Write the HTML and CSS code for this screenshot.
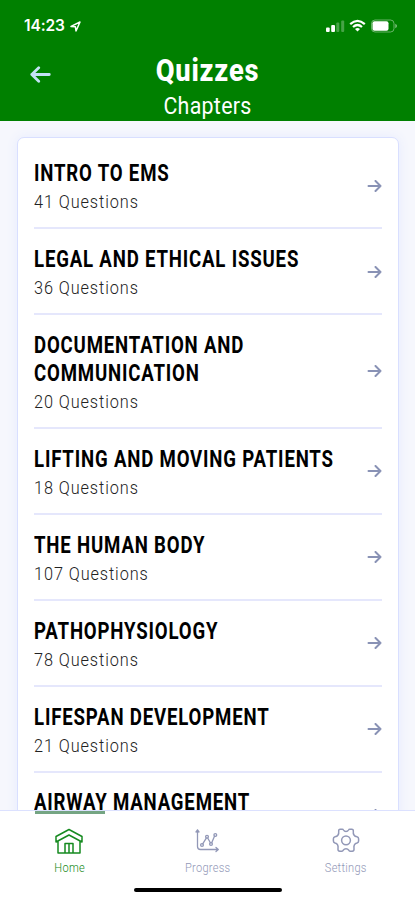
FILE: index.html
```html
<!DOCTYPE html>
<html lang="en">
<head>
<meta charset="utf-8">
<meta name="viewport" content="width=device-width, initial-scale=1">
<title>Quizzes</title>
<link rel="stylesheet" href="styles.css">
</head>
<body>
<svg class="defs" width="0" height="0"><symbol id="arrow" viewBox="0 0 14 12"><path d="M1 6H13M8 1L13 6L8 11" fill="none" stroke="currentColor" stroke-width="2" stroke-linecap="round" stroke-linejoin="round"/></symbol></svg>
<div class="app">
  <header class="header">
    <div class="status">
      <div class="clock"><span class="time">14:23</span>
        <svg width="11" height="11" viewBox="0 0 11 11"><path d="M1 5.4L10 1L6 10L5.4 5.8Z" fill="none" stroke="#fff" stroke-width="1.5" stroke-linejoin="round"/></svg>
      </div>
      <svg class="signals" width="73" height="14" viewBox="0 0 73 14">
        <g fill="#fff"><rect x="1" y="8.5" width="3.7" height="4.5" rx="1"/><rect x="6.2" y="6" width="3.8" height="7" rx="1"/><g opacity=".28"><rect x="11.3" y="3.5" width="3" height="9.5" rx="1"/><rect x="16.2" y="1.5" width="3" height="11.5" rx="1"/></g></g>
        <g fill="none" stroke="#fff" stroke-width="2.2"><path d="M25.2 5.1Q32.5-1.5 39.8 5.1"/><path d="M28 8Q32.5 4 37 8"/></g><path d="M30 10Q32.5 8 35 10L32.5 12.5Z" fill="#fff"/>
        <rect x="46.5" y="1" width="22.5" height="12" rx="3.5" fill="none" stroke="#fff" stroke-opacity=".4"/><rect x="47.5" y="2.2" width="16" height="9.6" rx="2" fill="#fff"/><path d="M70.3 4.8V9.2Q72 8.5 72 7T70.3 4.8" fill="#fff" opacity=".5"/>
      </svg>
    </div>
    <div class="heading">
      <svg class="back" width="21" height="17" viewBox="0 0 21 17"><path d="M19.3 8.5H1.8M8.7 1.8L1.8 8.5L8.7 15.2" fill="none" stroke="#c3e2f5" stroke-width="2.8" stroke-linecap="round" stroke-linejoin="round"/></svg>
      <div class="titles"><h1>Quizzes</h1><p>Chapters</p></div>
    </div>
  </header>
  <main class="content">
    <ul class="card">
      <li class="row"><div class="text"><h2>INTRO TO EMS</h2><p>41 Questions</p></div><svg class="go"><use href="#arrow"/></svg></li>
      <li class="row"><div class="text"><h2>LEGAL AND ETHICAL ISSUES</h2><p>36 Questions</p></div><svg class="go"><use href="#arrow"/></svg></li>
      <li class="row"><div class="text"><h2>DOCUMENTATION AND<br>COMMUNICATION</h2><p>20 Questions</p></div><svg class="go"><use href="#arrow"/></svg></li>
      <li class="row"><div class="text"><h2>LIFTING AND MOVING PATIENTS</h2><p>18 Questions</p></div><svg class="go"><use href="#arrow"/></svg></li>
      <li class="row"><div class="text"><h2>THE HUMAN BODY</h2><p>107 Questions</p></div><svg class="go"><use href="#arrow"/></svg></li>
      <li class="row"><div class="text"><h2>PATHOPHYSIOLOGY</h2><p>78 Questions</p></div><svg class="go"><use href="#arrow"/></svg></li>
      <li class="row"><div class="text"><h2>LIFESPAN DEVELOPMENT</h2><p>21 Questions</p></div><svg class="go"><use href="#arrow"/></svg></li>
      <li class="row"><div class="text"><h2>AIRWAY MANAGEMENT</h2><p></p></div><svg class="go"><use href="#arrow"/></svg></li>
    </ul>
  </main>
  <nav class="tabs">
    <a class="tab active"><svg width="28" height="27" viewBox="0 0 28 27"><path d="M1 8.5L14 1.5L27 8.5V14L14 7L1 14ZM3 13V25H25V13M10 25V15.5H18V25M14 16V25" fill="none" stroke="currentColor" stroke-width="1.5" stroke-linejoin="round"/></svg><span>Home</span></a>
    <a class="tab"><svg width="28" height="27" viewBox="0 0 28 27"><g fill="none" stroke="currentColor" stroke-width="1.3" stroke-linecap="round" stroke-linejoin="round"><path d="M4.5 2V18.5Q4.5 21.5 7.5 21.5H25M3 4L4.5 2L6 4M23 19.5L25.3 21.5L23 23.5M9.7 15.8L13.3 10.1M14.8 10.2L17.4 14.8M18.7 14.7L21.6 8.1"/><circle cx="9" cy="17" r="1.4"/><circle cx="14" cy="8.8" r="1.4"/><circle cx="18" cy="16" r="1.4"/><circle cx="22.3" cy="7" r="1.4"/></g></svg><span>Progress</span></a>
    <a class="tab"><svg width="28" height="27" viewBox="0 0 28 27"><g fill="none" stroke="currentColor" stroke-width="1.5" stroke-linejoin="round"><path d="M8.2 1.2H10.3Q11.1 1.2 11.5 2Q12.3 3.5 14 3.5T16.5 2Q16.9 1.2 17.7 1.2H19.8Q21.5 1.3 21.3 3Q20.8 8.2 25 8.7Q26.6 9 26.6 10.8V13Q26.6 14.5 25 15Q21.3 16 22 20.5Q22.3 23.2 20.2 23.2H18Q17.2 23.2 16.7 22.2Q15.8 20.7 14 20.7T11.3 22.2Q10.8 23.2 10 23.2H7.8Q5.7 23.2 6 20.5Q6.7 16 3 15Q1.4 14.5 1.4 13V10.8Q1.4 9 3 8.7Q7.2 8.2 6.7 3Q6.5 1.3 8.2 1.2Z"/><circle cx="14" cy="12.3" r="4.4"/></g></svg><span>Settings</span></a>
    <i class="indicator"></i>
    <i class="home-bar"></i>
  </nav>
</div>
</body>
</html>
```
FILE: styles.css
```css
* { box-sizing: border-box; }
body, h1, h2, p, ul { margin: 0; padding: 0; }
body { font-family: Roboto, "Liberation Sans", sans-serif; color: #000; }
.defs { display: block; height: 0; }
.app { height: 900px; display: flex; flex-direction: column; overflow: hidden; background: #f6f7fd; }
.header { height: 121px; flex: none; background: #008000; color: #fff; }
.status { height: 52px; padding: 0 17px 0 24px; display: flex; justify-content: space-between; align-items: center; }
.clock { display: flex; align-items: center; gap: 3px; }
.time { font: 600 15.5px/20px Inter, sans-serif; width: 43px; letter-spacing: -.1px; }
.heading { display: grid; grid-template-columns: 60px 1fr 60px; }
.back { margin: 14px 0 0 30px; }
.titles { text-align: center; }
.titles h1 { font-size: 31px; line-height: 38px; font-weight: 800; transform: scaleX(.88); letter-spacing: .9px; }
.titles p { font-size: 23px; line-height: 34px; transform: scaleX(.93); letter-spacing: .3px; }
.content { flex: 1; min-height: 0; padding: 16px 16px 0 17px; overflow: hidden; }
.card { list-style: none; padding: 5.3px 16px 0; height: 760px; border: 1px solid #d9dfff; border-radius: 7px; background: #fff; box-shadow: 0 0 12px #e6ebff; }
.row { display: flex; justify-content: space-between; align-items: center; padding: 16.9px 0 11px; border-bottom: 2px solid #e5e7fc; }
.text { flex: 1; min-width: 0; }
.row h2 { font-size: 23px; line-height: 28px; font-weight: 700; letter-spacing: 1px; white-space: nowrap; transform: scaleX(.81); transform-origin: left; }
.row p { height: 28px; font-size: 18px; line-height: 27px; font-weight: 300; letter-spacing: 1px; color: #222; transform: scaleX(.905); transform-origin: left; }
.go { flex: none; width: 15px; height: 12px; margin-bottom: 5px; color: #8992b5; }
.tabs { position: relative; flex: none; height: 90px; display: grid; grid-template-columns: repeat(3, 1fr); background: #fff; border-top: 1px solid #dce1ff; }
.tab { display: flex; flex-direction: column; align-items: center; padding-top: 17px; color: #9298b7; }
.tab span { font-size: 12px; line-height: 16px; margin-top: 5px; letter-spacing: .3px; font-weight: 300; transform: scaleX(.92); }
.tab.active { color: #168a20; }
.indicator { position: absolute; left: 35px; top: 0; width: 70px; height: 3px; background: #75a583; }
.home-bar { position: absolute; left: 134px; bottom: 8px; width: 148px; height: 4px; border-radius: 2px; background: #000; }
```
